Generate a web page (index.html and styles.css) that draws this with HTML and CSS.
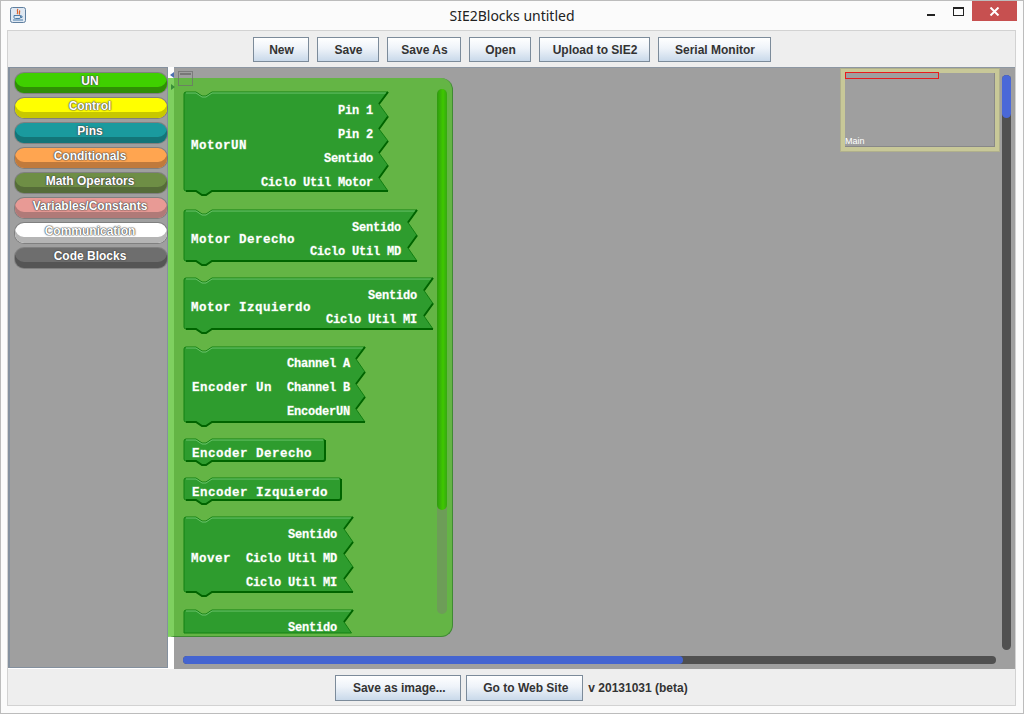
FILE: index.html
```html
<!DOCTYPE html>
<html lang="es">
<head>
<meta charset="UTF-8" />
<title>SIE2Blocks untitled</title>
<link rel="stylesheet" href="styles.css">
</head>
<body>
<div class="window">
  <div class="titlebar">
    <svg class="app-icon" width="16" height="16" viewBox="0 0 16 16">
      <rect x="0.5" y="0.5" width="15" height="15" rx="2" fill="#dfe8f2" stroke="#5f7f9f" />
      <path d="M8 2 C6 4 9 5 7 7 M10 3.5 C8.5 5 10.5 6 9 7.5" fill="none" stroke="#d9622b" stroke-width="1.2" />
      <path d="M4 8.5 H10.5 V10.5 Q10.5 11.5 9 11.5 H5.5 Q4 11.5 4 10.5 Z M10.5 9 H12 V10.5 H10.5" fill="none" stroke="#4d7da8" />
      <path d="M3 13 H13" stroke="#4d7da8" />
    </svg>
    <span class="title">SIE2Blocks untitled</span>
    <div class="win-controls">
      <span class="win-min"></span>
      <span class="win-max"></span>
      <span class="win-close">
        <svg width="11" height="9" viewBox="0 0 11 9"><path d="M1.5 0.5 L9.5 8.5 M9.5 0.5 L1.5 8.5" stroke="#fff" stroke-width="2" /></svg>
      </span>
    </div>
  </div>

  <div class="content">
    <div class="toolbar">
      <button class="btn btn-new">New</button>
      <button class="btn btn-save">Save</button>
      <button class="btn btn-saveas">Save As</button>
      <button class="btn btn-open">Open</button>
      <button class="btn btn-upload">Upload to SIE2</button>
      <button class="btn btn-serial">Serial Monitor</button>
    </div>

    <div class="workspace">
      <div class="sidebar">
        <div class="pill pill-un">UN</div>
        <div class="pill pill-control">Control</div>
        <div class="pill pill-pins">Pins</div>
        <div class="pill pill-cond">Conditionals</div>
        <div class="pill pill-math">Math Operators</div>
        <div class="pill pill-vars">Variables/Constants</div>
        <div class="pill pill-comm">Communication</div>
        <div class="pill pill-code">Code Blocks</div>
      </div>
      <div class="gutter"></div>
      <div class="canvas"></div>

      <!-- bloques del cajon, encima del canvas -->
      <div class="drawer">
        <div class="block-list">
          <svg class="block" width="206" height="108">
            <path class="shape" d="M1 4 Q1 2 3 2 H13 L19 6 H23 L29 2 H205 L196 14 L205 26.5 L196 39 L205 51 L196 63 L205 75.5 L196 88 L205 101 H29 L23 105 H19 L13 101 H3 Q1 101 1 99 Z" />
            <path class="hi" d="M3 3 H13 L19 7 H23 L29 3 H203" />
            <path class="lo" d="M205 2 L196 14 M205 26.5 L196 39 M205 51 L196 63 M205 75.5 L196 88 M205 101 H29 L23 105 H19 L13 101 H3" />
            <text class="name" x="8" y="58">MotorUN</text>
            <text class="end" x="190" y="23">Pin 1</text>
            <text class="end" x="190" y="47">Pin 2</text>
            <text class="end" x="190" y="71">Sentido</text>
            <text class="end" x="190" y="95">Ciclo Util Motor</text>
          </svg>
          <svg class="block" width="235" height="58">
            <path class="shape" d="M1 4 Q1 2 3 2 H13 L19 6 H23 L29 2 H234 L225 14.5 L234 27.5 L225 40 L234 53 H29 L23 57 H19 L13 53 H3 Q1 53 1 51 Z" />
            <path class="hi" d="M3 3 H13 L19 7 H23 L29 3 H232" />
            <path class="lo" d="M234 2 L225 14.5 M234 27.5 L225 40 M234 53 H29 L23 57 H19 L13 53 H3" />
            <text class="name" x="8" y="34">Motor Derecho</text>
            <text class="end" x="218" y="22">Sentido</text>
            <text class="end" x="218" y="46">Ciclo Util MD</text>
          </svg>
          <svg class="block" width="251" height="59">
            <path class="shape" d="M1 4 Q1 2 3 2 H13 L19 6 H23 L29 2 H250 L241 14.5 L250 27.5 L241 40 L250 53 H29 L23 57 H19 L13 53 H3 Q1 53 1 51 Z" />
            <path class="hi" d="M3 3 H13 L19 7 H23 L29 3 H248" />
            <path class="lo" d="M250 2 L241 14.5 M250 27.5 L241 40 M250 53 H29 L23 57 H19 L13 53 H3" />
            <text class="name" x="8" y="34">Motor Izquierdo</text>
            <text class="end" x="234" y="22">Sentido</text>
            <text class="end" x="234" y="46">Ciclo Util MI</text>
          </svg>
          <svg class="block" width="183" height="82">
            <path class="shape" d="M1 4 Q1 2 3 2 H13 L19 6 H23 L29 2 H182 L173 14 L182 27 L173 39 L182 52 L173 64 L182 77 H29 L23 81 H19 L13 77 H3 Q1 77 1 75 Z" />
            <path class="hi" d="M3 3 H13 L19 7 H23 L29 3 H180" />
            <path class="lo" d="M182 2 L173 14 M182 27 L173 39 M182 52 L173 64 M182 77 H29 L23 81 H19 L13 77 H3" />
            <text class="name" x="9" y="45">Encoder Un</text>
            <text class="end" x="167" y="21">Channel A</text>
            <text class="end" x="167" y="45">Channel B</text>
            <text class="end" x="167" y="69">EncoderUN</text>
          </svg>
          <svg class="block" width="143" height="29">
            <path class="shape" d="M1 4 Q1 2 3 2 H13 L19 6 H23 L29 2 H140 Q142 2 142 4 V22 Q142 24 140 24 H29 L23 28 H19 L13 24 H3 Q1 24 1 22 Z" />
            <path class="hi" d="M3 3 H13 L19 7 H23 L29 3 H140" />
            <path class="lo" d="M142 3 V22 Q142 24 140 24 H29 L23 28 H19 L13 24 H3" />
            <text class="name" x="9" y="19">Encoder Derecho</text>
          </svg>
          <svg class="block" width="159" height="29">
            <path class="shape" d="M1 4 Q1 2 3 2 H13 L19 6 H23 L29 2 H156 Q158 2 158 4 V22 Q158 24 156 24 H29 L23 28 H19 L13 24 H3 Q1 24 1 22 Z" />
            <path class="hi" d="M3 3 H13 L19 7 H23 L29 3 H156" />
            <path class="lo" d="M158 3 V22 Q158 24 156 24 H29 L23 28 H19 L13 24 H3" />
            <text class="name" x="9" y="19">Encoder Izquierdo</text>
          </svg>
          <svg class="block" width="171" height="83">
            <path class="shape" d="M1 4 Q1 2 3 2 H13 L19 6 H23 L29 2 H170 L161 14 L170 27 L161 39 L170 52 L161 64 L170 77 H29 L23 81 H19 L13 77 H3 Q1 77 1 75 Z" />
            <path class="hi" d="M3 3 H13 L19 7 H23 L29 3 H168" />
            <path class="lo" d="M170 2 L161 14 M170 27 L161 39 M170 52 L161 64 M170 77 H29 L23 81 H19 L13 77 H3" />
            <text class="name" x="8" y="46">Mover</text>
            <text class="end" x="154" y="22">Sentido</text>
            <text class="end" x="154" y="46">Ciclo Util MD</text>
            <text class="end" x="154" y="70">Ciclo Util MI</text>
          </svg>
          <svg class="block" width="171" height="27">
            <path class="shape" d="M1 25 V4 Q1 2 3 2 H13 L19 6 H23 L29 2 H170 L161 14 L168.5 25 Z" />
            <path class="hi" d="M3 3 H13 L19 7 H23 L29 3 H168" />
            <path class="lo" d="M170 2 L161 14" />
            <text class="end" x="154" y="22">Sentido</text>
          </svg>
        </div>
        <div class="drawer-track"><div class="drawer-thumb"></div></div>
      </div>

      <span class="collapse-arrow"></span>
      <span class="collapse-box"></span>
      <span class="drawer-arrow"></span>

      <div class="minimap">
        <div class="minimap-view"></div>
        <span class="minimap-label">Main</span>
      </div>
      <div class="vscroll"><div class="vscroll-thumb"></div></div>
      <div class="hscroll"><div class="hscroll-thumb"></div></div>
    </div>

    <div class="footer">
      <button class="btn btn-image">Save as image...</button>
      <button class="btn btn-web">Go to Web Site</button>
      <span class="version">v 20131031 (beta)</span>
    </div>
  </div>
</div>
</body>
</html>
```

FILE: styles.css
```css
html, body { margin: 0; padding: 0; }
body { width: 1024px; height: 714px; overflow: hidden; font-family: "Liberation Sans", Arial, sans-serif; }

.window {
  width: 1024px; height: 714px; box-sizing: border-box;
  background: #fbfbfb; border: 1px solid #bcbcbc;
  display: flex; flex-direction: column;
}

/* barra de titulo */
.titlebar { height: 29px; position: relative; display: flex; align-items: center; justify-content: center; }
.app-icon { position: absolute; left: 9px; top: 6px; }
.title { font-family: "Noto Sans", sans-serif; font-size: 14px; color: #222; }
.win-controls { position: absolute; right: 6px; top: 0; display: flex; align-items: flex-start; }
.win-min { width: 8px; height: 2px; background: #222; margin: 13px 18px 0 0; }
.win-max { width: 9px; height: 6px; border: 1px solid #222; border-top-width: 2px; margin: 6px 8px 0 0; }
.win-close {
  width: 45px; height: 20px; background: #c75050;
  display: flex; align-items: center; justify-content: center;
}

.content {
  width: 1009px; height: 676px; box-sizing: border-box; margin-left: 6px;
  border: 1px solid #d2d2d2;
  background: #eeeeee; display: flex; flex-direction: column;
}

.toolbar { height: 36px; box-sizing: border-box; padding-top: 6px; display: flex; justify-content: center; gap: 8px; }
.footer { flex: 1; box-sizing: border-box; padding-top: 6px; display: flex; justify-content: center; gap: 5px; }

.btn {
  height: 25px; padding: 0 0 0 2px; box-sizing: border-box;
  font-family: "Liberation Sans", Arial, sans-serif; font-size: 12px; font-weight: bold; color: #333;
  background: linear-gradient(#ffffff 0%, #eef3f9 45%, #c9d9ea 100%);
  border: 1px solid #7c8b9a;
}
.btn-new { width: 56px; }
.btn-save { width: 62px; }
.btn-saveas { width: 74px; }
.btn-open { width: 62px; }
.btn-upload { width: 111px; }
.btn-serial { width: 113px; }
.btn-image { width: 126px; height: 26px; }
.btn-web { width: 117px; height: 26px; }
.version { font-size: 12px; font-weight: bold; color: #333; line-height: 26px; }

/* zona de trabajo */
.workspace { position: relative; height: 602px; display: flex; background: #fff; }
.sidebar {
  width: 160px; height: 601px; box-sizing: border-box;
  background: #9f9f9f; border: 1px solid #84909e; border-left-width: 2px;
  padding: 5px 0 0 5px;
  display: flex; flex-direction: column; gap: 5px;
}
.gutter { width: 6px; }
.canvas { flex: 1; background: #9f9f9f; border-top: 1px solid #8d97a3; }

.pill {
  width: 152px; height: 20px; box-sizing: border-box; border-radius: 9px;
  padding: 0 2px 4px 0; text-align: center; line-height: 16px;
  font-size: 12px; font-weight: bold; color: #fff;
  text-shadow: 0 0 1px #444, 0 0 1px #444, 0 0 2px #555;
}
.pill-un { background: #3fd000; box-shadow: inset 0 -6px 0 #2f8f05, 0 0 0 1px rgba(90, 90, 90, 0.45); }
.pill-control { background: #ffff00; box-shadow: inset 0 -6px 0 #c8c800, 0 0 0 1px rgba(90, 90, 90, 0.45); }
.pill-pins { background: #1a9a9e; box-shadow: inset 0 -6px 0 #137578, 0 0 0 1px rgba(90, 90, 90, 0.45); }
.pill-cond { background: #ffa550; box-shadow: inset 0 -6px 0 #c07a3c, 0 0 0 1px rgba(90, 90, 90, 0.45); }
.pill-math { background: #6e8e45; box-shadow: inset 0 -6px 0 #556c38, 0 0 0 1px rgba(90, 90, 90, 0.45); }
.pill-vars { background: #e89a95; box-shadow: inset 0 -6px 0 #b07a78, 0 0 0 1px rgba(90, 90, 90, 0.45); }
.pill-comm { background: #ffffff; box-shadow: inset 0 -6px 0 #b5b5b5, 0 0 0 1px rgba(90, 90, 90, 0.45); }
.pill-code { background: #6e6e6e; box-shadow: inset 0 -6px 0 #555555, 0 0 0 1px rgba(90, 90, 90, 0.45); }

/* cajon de bloques */
.drawer {
  position: absolute; left: 160px; top: 11px; width: 285px; height: 559px; box-sizing: border-box;
  background: #64b545;
  border-left: 6px solid #7fd060; border-right: 1px solid #3f8a33; border-bottom: 1px solid #3f8a33;
  border-radius: 0 12px 12px 0;
  padding: 13px 0 0 9px;
}
.block-list { height: 545px; display: flex; flex-direction: column; align-items: flex-start; gap: 10px; }
.block { display: block; flex: none; }
.block path { transform: translateY(-1px); }
.block .shape { fill: #2e9c2e; stroke: #128012; stroke-width: 1; }
.block .hi { fill: none; stroke: #6cc46c; stroke-width: 1; }
.block .lo { fill: none; stroke: #006400; stroke-width: 2; }
.block text {
  font-family: "Liberation Mono", monospace; font-size: 12px; font-weight: bold; letter-spacing: -0.2px;
  fill: #fff; stroke: rgba(255, 255, 255, 0.35); stroke-width: 0.8px;
}
.block text.name { font-size: 12.5px; letter-spacing: 0.5px; }
.block text.end { text-anchor: end; }

.drawer-track { position: absolute; left: 263px; top: 11px; width: 10px; height: 525px; background: #6d9d58; border-radius: 5px; }
.drawer-thumb { height: 421px; border-radius: 5px; background: linear-gradient(90deg, #2f9a10, #3fc800 60%, #35a810); }

.collapse-arrow {
  position: absolute; left: 162px; top: 5px; width: 0; height: 0;
  border: 3px solid transparent; border-right: 4px solid #4d6fb0; border-left: 0;
}
.collapse-box { position: absolute; left: 170px; top: 4px; width: 13px; height: 13px; border: 1px solid rgba(110, 110, 110, 0.7); }
.collapse-box::before { content: ""; display: block; height: 2px; margin: 1px 1px 0; background: #777; }
.drawer-arrow {
  position: absolute; left: 163px; top: 17px; width: 0; height: 0;
  border: 3px solid transparent; border-left: 4px solid #3a8f3a; border-right: 0;
}

/* minimapa */
.minimap {
  position: absolute; left: 832px; top: 1px; width: 160px; height: 84px; box-sizing: border-box;
  background: #9f9f9f; border: 5px solid #c8c898; outline: 1px solid #b0b08c; outline-offset: -1px;
  box-shadow: inset -1px -1px 0 #888;
}
.minimap-view { position: absolute; left: 0; top: -1px; width: 92px; height: 5px; border: 1px solid #e81c1c; }
.minimap-label { position: absolute; left: 0; bottom: 0; font-size: 9px; line-height: 11px; color: #fff; }

.vscroll { position: absolute; left: 994px; top: 8px; width: 9px; height: 575px; background: #505050; border-radius: 5px; }
.vscroll-thumb { height: 43px; border-radius: 5px; background: #4a68d8; }
.hscroll { position: absolute; left: 175px; top: 589px; width: 813px; height: 8px; background: #505050; border-radius: 4px; }
.hscroll-thumb { width: 500px; height: 8px; border-radius: 4px; background: #4464d0; }
```
